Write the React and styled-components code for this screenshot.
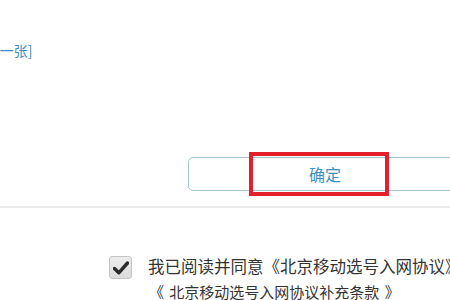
import styled, { createGlobalStyle } from "styled-components";

const GlobalStyle = createGlobalStyle`
	html, body {
		margin: 0;
		padding: 0;
		background: #ffffff;
		overflow: hidden;
	}
	body {
		font-family: "Noto Sans CJK SC", "Liberation Sans", sans-serif;
	}
`;

const App = () => {
	return (
		<PageStyled>
			<GlobalStyle />
			<div className="top">
				<RefreshLink>[换一张]</RefreshLink>
				<ButtonRow>
					<ConfirmButton>确定</ConfirmButton>
					<Highlight />
				</ButtonRow>
			</div>
			<Divider />
			<Agreement>
				<CheckBox>
					<svg width="16" height="14" viewBox="0 0 16 14">
						<path d="M1.5 7.5 L5.8 11.8 L14.5 2" fill="none" stroke="#2b2b2b" strokeWidth="3.4" strokeLinecap="round" strokeLinejoin="round" />
					</svg>
				</CheckBox>
				<div className="terms">
					<TermsLine $size={16.5}>我已阅读并同意《北京移动选号入网协议》</TermsLine>
					<TermsLine $size={15} $indent={1} $spacing={2}>《 北京移动选号入网协议补充条款 》</TermsLine>
				</div>
			</Agreement>
		</PageStyled>
	);
};

const PageStyled = styled.div`
	width: 450px;
	height: 300px;
	overflow: hidden;
	background: #ffffff;

	.top {
		height: 206px;
		padding-top: 42px;
		box-sizing: border-box;
	}
`;

const RefreshLink = styled.div`
	margin-left: -19px;
	font-size: 14px;
	line-height: 16px;
	color: #3d8fc3;
	white-space: nowrap;
`;

const ButtonRow = styled.div`
	position: relative;
	margin-top: 99px;
	padding-left: 188px;
	display: flex;
`;

const ConfirmButton = styled.button`
	flex: none;
	width: 274px;
	height: 34px;
	border: 1px solid #a2c6d6;
	border-radius: 5px;
	background: #ffffff;
	color: #3d8fc3;
	font-family: "Noto Sans CJK SC", "Liberation Sans", sans-serif;
	font-size: 16px;
	padding: 0;
`;

const Highlight = styled.div`
	position: absolute;
	left: 249px;
	top: -5px;
	width: 140px;
	height: 44px;
	box-sizing: border-box;
	border: 4px solid #e21f2b;
`;

const Divider = styled.div`
	height: 2px;
	background: #ececec;
`;

const Agreement = styled.div`
	display: flex;
	align-items: flex-start;
	gap: 16px;
	padding: 48px 0 0 109px;

	.terms {
		white-space: nowrap;
		color: #333333;
		margin-top: -2px;
	}
`;

const TermsLine = styled.p`
	margin: 0 0 0 ${(p) => p.$indent || 0}px;
	font-size: ${(p) => p.$size}px;
	line-height: 25px;
	word-spacing: ${(p) => p.$spacing || 0}px;
`;

const CheckBox = styled.span`
	flex: none;
	width: 23px;
	height: 23px;
	box-sizing: border-box;
	border: 1px solid #c4c4c4;
	border-radius: 3px;
	background: linear-gradient(#ececec, #dcdcdc);
	display: flex;
	align-items: center;
	justify-content: center;
`;

export default App;
